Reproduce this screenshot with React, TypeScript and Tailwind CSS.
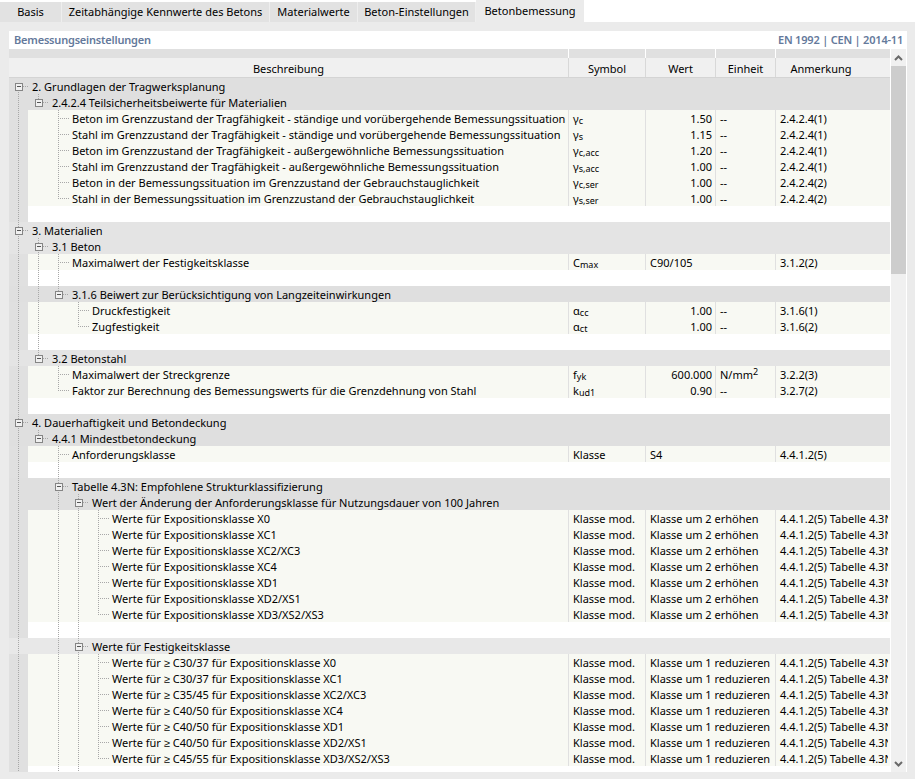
import type { ReactNode } from 'react'

type Tone = 'a' | 'b' | 'c'
type Row =
  | { kind: 'blank' }
  | { kind: 'group'; level: number; label: string; tone: Tone }
  | {
      kind: 'data'
      level: number
      label: string
      sym: ReactNode
      value: string
      unit?: ReactNode
      note: string
    }

const TABS = [
  { label: 'Basis', width: 'w-[62px]' },
  { label: 'Zeitabhängige Kennwerte des Betons', width: 'w-[208px]' },
  { label: 'Materialwerte', width: 'w-[88px]' },
  { label: 'Beton-Einstellungen', width: 'w-[118px]' },
]

const TEXT_INDENT: Record<number, string> = {
  2: 'pl-[44px]',
  3: 'pl-[64px]',
  4: 'pl-[84px]',
}

const GROUP_INDENT: Record<number, string> = {
  0: 'pl-[23px]',
  1: 'pl-[43px]',
  2: 'pl-[63px]',
  3: 'pl-[83px]',
}

const GROUP_TONE: Record<Tone, string> = {
  a: 'bg-[#dfdfdf]',
  b: 'bg-[#e4e4e4]',
  c: 'bg-[#e8e8e8]',
}

const BLANK: Row = { kind: 'blank' }

function sym(base: string, sub: string) {
  return (
    <>
      {base}
      <sub className="bottom-[-1px] text-[9px]">{sub}</sub>
    </>
  )
}

const data = (level: number, label: string, s: ReactNode, value: string, note: string, unit: ReactNode = '--'): Row => ({
  kind: 'data',
  level,
  label,
  sym: s,
  value,
  unit,
  note,
})

const klasse = (label: string, value: string): Row => ({
  kind: 'data',
  level: 4,
  label,
  sym: 'Klasse mod.',
  value,
  note: '4.4.1.2(5) Tabelle 4.3N',
})

const ROWS: Row[] = [
  { kind: 'group', level: 0, label: '2. Grundlagen der Tragwerksplanung', tone: 'a' },
  { kind: 'group', level: 1, label: '2.4.2.4 Teilsicherheitsbeiwerte für Materialien', tone: 'a' },
  data(2, 'Beton im Grenzzustand der Tragfähigkeit - ständige und vorübergehende Bemessungssituation', sym('γ', 'c'), '1.50', '2.4.2.4(1)'),
  data(2, 'Stahl im Grenzzustand der Tragfähigkeit - ständige und vorübergehende Bemessungssituation', sym('γ', 's'), '1.15', '2.4.2.4(1)'),
  data(2, 'Beton im Grenzzustand der Tragfähigkeit - außergewöhnliche Bemessungssituation', sym('γ', 'c,acc'), '1.20', '2.4.2.4(1)'),
  data(2, 'Stahl im Grenzzustand der Tragfähigkeit - außergewöhnliche Bemessungssituation', sym('γ', 's,acc'), '1.00', '2.4.2.4(1)'),
  data(2, 'Beton in der Bemessungssituation im Grenzzustand der Gebrauchstauglichkeit', sym('γ', 'c,ser'), '1.00', '2.4.2.4(2)'),
  data(2, 'Stahl in der Bemessungssituation im Grenzzustand der Gebrauchstauglichkeit', sym('γ', 's,ser'), '1.00', '2.4.2.4(2)'),
  BLANK,
  { kind: 'group', level: 0, label: '3. Materialien', tone: 'b' },
  { kind: 'group', level: 1, label: '3.1 Beton', tone: 'b' },
  { kind: 'data', level: 2, label: 'Maximalwert der Festigkeitsklasse', sym: sym('C', 'max'), value: 'C90/105', note: '3.1.2(2)' },
  BLANK,
  { kind: 'group', level: 2, label: '3.1.6 Beiwert zur Berücksichtigung von Langzeiteinwirkungen', tone: 'a' },
  data(3, 'Druckfestigkeit', sym('α', 'cc'), '1.00', '3.1.6(1)'),
  data(3, 'Zugfestigkeit', sym('α', 'ct'), '1.00', '3.1.6(2)'),
  BLANK,
  { kind: 'group', level: 1, label: '3.2 Betonstahl', tone: 'b' },
  data(2, 'Maximalwert der Streckgrenze', sym('f', 'yk'), '600.000', '3.2.2(3)', <>N/mm<sup className="text-[9px]">2</sup></>),
  data(2, 'Faktor zur Berechnung des Bemessungswerts für die Grenzdehnung von Stahl', sym('k', 'ud1'), '0.90', '3.2.7(2)'),
  BLANK,
  { kind: 'group', level: 0, label: '4. Dauerhaftigkeit und Betondeckung', tone: 'a' },
  { kind: 'group', level: 1, label: '4.4.1 Mindestbetondeckung', tone: 'a' },
  { kind: 'data', level: 2, label: 'Anforderungsklasse', sym: 'Klasse', value: 'S4', note: '4.4.1.2(5)' },
  BLANK,
  { kind: 'group', level: 2, label: 'Tabelle 4.3N: Empfohlene Strukturklassifizierung', tone: 'a' },
  { kind: 'group', level: 3, label: 'Wert der Änderung der Anforderungsklasse für Nutzungsdauer von 100 Jahren', tone: 'a' },
  ...['X0', 'XC1', 'XC2/XC3', 'XC4', 'XD1', 'XD2/XS1', 'XD3/XS2/XS3'].map((c) =>
    klasse(`Werte für Expositionsklasse ${c}`, 'Klasse um 2 erhöhen'),
  ),
  BLANK,
  { kind: 'group', level: 3, label: 'Werte für Festigkeitsklasse', tone: 'c' },
  ...[
    'C30/37 für Expositionsklasse X0',
    'C30/37 für Expositionsklasse XC1',
    'C35/45 für Expositionsklasse XC2/XC3',
    'C40/50 für Expositionsklasse XC4',
    'C40/50 für Expositionsklasse XD1',
    'C40/50 für Expositionsklasse XD2/XS1',
    'C45/55 für Expositionsklasse XD3/XS2/XS3',
  ].map((c) => klasse(`Werte für ≥ ${c}`, 'Klasse um 1 reduzieren')),
]

// level, first row, last row (-1 = runs off the bottom)
const GUIDES = [
  [0, 0, -1],
  [1, 1, 1],
  [1, 10, 17],
  [1, 22, 22],
  [2, 2, 7],
  [2, 11, 13],
  [2, 18, 19],
  [2, 23, -1],
  [3, 14, 15],
  [3, 26, -1],
  [4, 27, 33],
  [4, 36, 42],
]

const BODY_HEIGHT = 694

function TreeLines() {
  return (
    <svg className="pointer-events-none absolute left-0 top-0" width="130" height={BODY_HEIGHT} viewBox={`0 0 130 ${BODY_HEIGHT}`} shapeRendering="crispEdges">
      <g stroke="#a8a8a8" strokeDasharray="1 1" fill="none">
        {GUIDES.map(([l, a, b]) => (
          <line
            key={`${l}-${a}`}
            x1={9.5 + 20 * l}
            x2={9.5 + 20 * l}
            y1={l === 0 ? 8 : 16 * a}
            y2={b < 0 ? BODY_HEIGHT : 16 * b + 8}
          />
        ))}
        {ROWS.map((r, i) => {
          if (r.kind === 'blank') return null
          const x = 9 + 20 * r.level
          return <line key={i} x1={r.kind === 'group' ? x + 5 : x} x2={x + 11} y1={16 * i + 8.5} y2={16 * i + 8.5} />
        })}
      </g>
      {ROWS.map((r, i) => {
        if (r.kind !== 'group') return null
        const x = 20 * r.level
        const y = 16 * i
        return (
          <g key={i} fill="none" stroke="#858585">
            <rect x={6.5 + x} y={y + 5.5} width="7" height="7" fill="#f0f0f0" />
            <line x1={8 + x} x2={12 + x} y1={y + 8.5} y2={y + 8.5} stroke="#555555" />
          </g>
        )
      })}
    </svg>
  )
}

function TableRow({ row }: { row: Row }) {
  if (row.kind === 'blank') {
    return (
      <div className="flex h-4">
        <div className="w-[19px] bg-[#e0e0e0]" />
        <div className="flex-1 bg-white" />
      </div>
    )
  }
  if (row.kind === 'group') {
    return <div className={`h-4 whitespace-nowrap leading-[18px] ${GROUP_TONE[row.tone]} ${GROUP_INDENT[row.level]}`}>{row.label}</div>
  }
  const wide = row.unit === undefined
  return (
    <div className="flex h-4 leading-[18px]">
      <div className="w-[19px] bg-[#e0e0e0]" />
      <div className="flex flex-1 bg-[#f8f9f3]">
        <div className={`w-[541px] whitespace-nowrap border-r border-[#e0e0e0] ${TEXT_INDENT[row.level]}`}>{row.label}</div>
        <div className="w-[77px] border-r border-[#e0e0e0] pl-1 whitespace-nowrap">{row.sym}</div>
        {wide ? (
          <div className="w-[130px] border-r border-[#e0e0e0] pl-1 whitespace-nowrap">{row.value}</div>
        ) : (
          <>
            <div className="w-[70px] border-r border-[#e0e0e0] pr-[3px] text-right">{row.value}</div>
            <div className="w-[60px] border-r border-[#e0e0e0] pl-1 whitespace-nowrap">{row.unit}</div>
          </>
        )}
        <div className="w-[112px] overflow-hidden pl-1 whitespace-nowrap">{row.note}</div>
      </div>
    </div>
  )
}

function Chevron({ up }: { up?: boolean }) {
  return (
    <svg width="9" height="6" viewBox="0 0 9 6" fill="none" stroke="#6a6a6a" strokeWidth="2">
      <path d={up ? 'M1 5 L4.5 1.5 L8 5' : 'M1 1 L4.5 4.5 L8 1'} />
    </svg>
  )
}

export default function App() {
  return (
    <div className="h-[779px] w-[915px] overflow-hidden bg-[#ebebeb] font-['Noto_Sans',sans-serif] text-[11px] text-black">
      <div className="flex h-[22px] items-end bg-white">
        {TABS.map((t) => (
          <div key={t.label} className={`flex h-5 items-center justify-center whitespace-nowrap border-r border-[#eeeeee] bg-[#e2e2e2] ${t.width}`}>
            {t.label}
          </div>
        ))}
        <div className="flex h-[22px] w-[108px] items-center justify-center bg-[#ebebeb] pt-px">Betonbemessung</div>
      </div>

      <div className="ml-[9px] mt-[9px] w-[898px]">
        <div className="flex h-[18px] items-center justify-between bg-white pl-[5px] pr-1 font-semibold tracking-[-0.2px] text-[#64799b]">
          <span>Bemessungseinstellungen</span>
          <span>EN 1992 | CEN | 2014-11</span>
        </div>
        <div className="flex bg-white">
          <div className="w-[881px]">
            <div className="flex h-[9px] bg-[#e0e0e0]">
              <div className="w-[560px] border-r border-white" />
              <div className="w-[77px] border-r border-white" />
              <div className="w-[70px] border-r border-white" />
              <div className="w-[60px] border-r border-white" />
            </div>
            <div className="flex h-5 border-b border-[#d4d4d4] bg-[#f0f0f0] text-center leading-[21px]">
              <div className="w-[560px] border-r border-[#d8d8d8]">Beschreibung</div>
              <div className="w-[77px] border-r border-[#d8d8d8]">Symbol</div>
              <div className="w-[70px] border-r border-[#d8d8d8]">Wert</div>
              <div className="w-[60px] border-r border-[#d8d8d8]">Einheit</div>
              <div className="w-[114px] pr-6">Anmerkung</div>
            </div>
            <div className="relative h-[694px] overflow-hidden">
              {ROWS.map((r, i) => (
                <TableRow key={i} row={r} />
              ))}
              <div className="h-[6px] w-[19px] bg-[#e0e0e0]" />
              <TreeLines />
            </div>
          </div>
          <div className="ml-px flex h-[723px] w-[15px] flex-col bg-[#f0f0f0]">
            <div className="flex h-[17px] items-center justify-center">
              <Chevron up />
            </div>
            <div className="h-[208px] bg-[#cdcdcd]" />
            <div className="flex-1" />
            <div className="flex h-[17px] items-center justify-center">
              <Chevron />
            </div>
          </div>
        </div>
      </div>
    </div>
  )
}
